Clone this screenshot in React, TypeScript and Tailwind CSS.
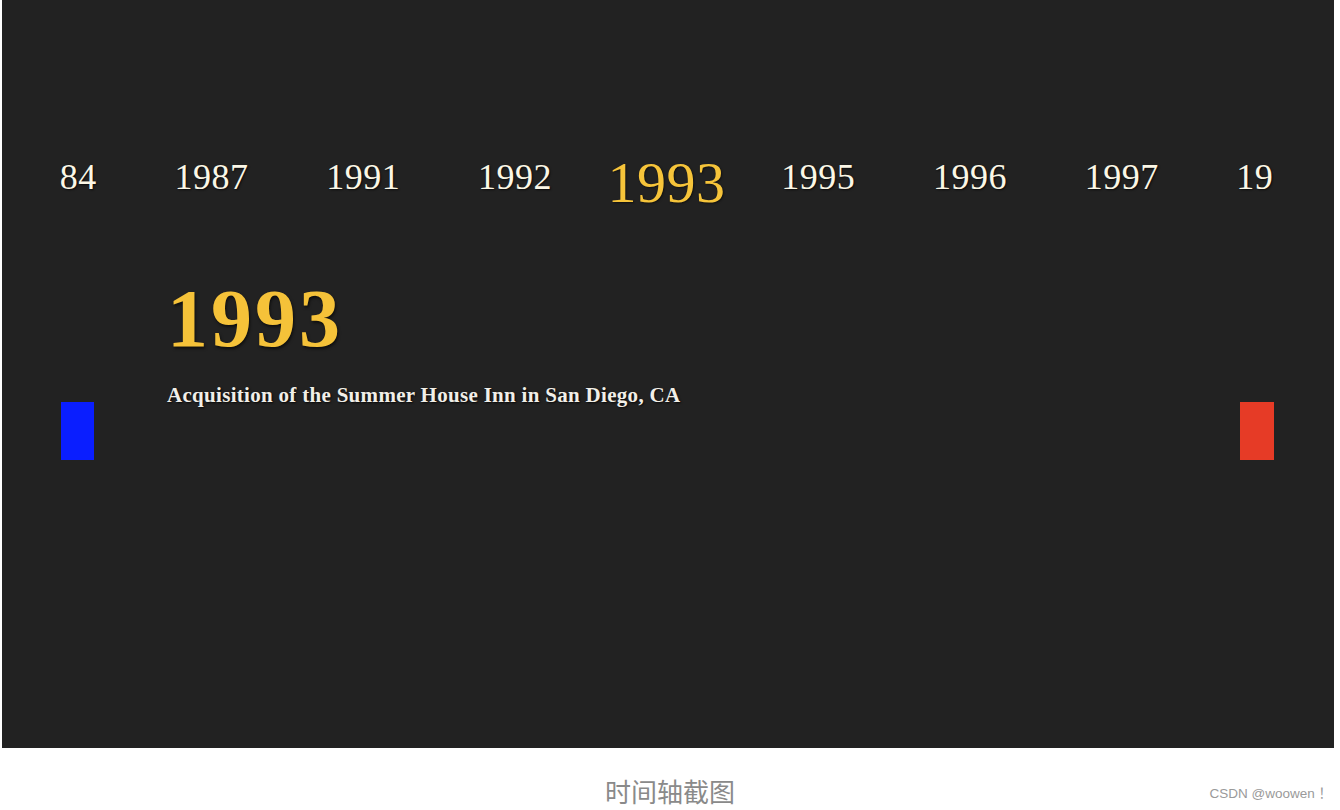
const YEARS = ['1984', '1987', '1991', '1992', '1993', '1995', '1996', '1997', '1998'];
const ACTIVE = '1993';

const EVENT = {
  year: '1993',
  text: 'Acquisition of the Summer House Inn in San Diego, CA',
};

const serif = "[font-family:Georgia,'Liberation_Serif','Times_New_Roman',serif]";

function YearStrip() {
  return (
    <div className="h-[80px] w-[1214px] overflow-hidden">
      {/* track is scrolled so the active year sits in the middle */}
      <div className="-ml-[76px] flex h-full items-center">
        {YEARS.map((y) =>
          y === ACTIVE ? (
            <div key={y} className="flex w-[151.7px] shrink-0 justify-center pt-[10px]">
              <span className={`${serif} text-[58px] leading-none tracking-[0.5px] text-[#f6c43a] [text-shadow:1px_1px_2px_rgba(0,0,0,0.5)]`}>{y}</span>
            </div>
          ) : (
            <div key={y} className="flex w-[151.7px] shrink-0 justify-center pb-[2px]">
              <span className={`${serif} text-[36px] leading-none tracking-[0.5px] text-[#fbf7e6] [text-shadow:1px_1px_2px_rgba(0,0,0,0.7)]`}>{y}</span>
            </div>
          ),
        )}
      </div>
    </div>
  );
}

export default function App() {
  return (
    <div className="h-[810px] w-[1340px] bg-white">
      <div className="ml-[2px] h-[748px] w-[1332px] bg-[#222222] pt-[138px]">
        <div className="pl-[58px]">
          <YearStrip />
        </div>

        <div className="mt-[60px] flex items-start pl-[59px] pr-[60px]">
          <button type="button" aria-label="prev" className="mt-[124px] h-[58px] w-[33px] shrink-0 bg-[#0a1eff]" />
          <div className="ml-[73px]">
            <h1 className={`${serif} text-[82px] font-bold leading-none tracking-[3px] text-[#f5c239] [text-shadow:1px_2px_3px_rgba(0,0,0,0.6)]`}>{EVENT.year}</h1>
            <p className={`${serif} mt-[25px] text-[21px] font-bold leading-none tracking-[0.3px] text-[#f1efe8] [text-shadow:1px_1px_2px_rgba(0,0,0,0.8)]`}>{EVENT.text}</p>
          </div>
          <button type="button" aria-label="next" className="ml-auto mt-[124px] h-[58px] w-[34px] shrink-0 bg-[#e63b26]" />
        </div>
      </div>

      <div className="relative h-[62px]">
        <p className="pt-[30px] text-center text-[26px] leading-[26px] text-[#8a8a8a] [font-family:'Noto_Sans_CJK_SC',sans-serif]">时间轴截图</p>
        <span className="absolute bottom-[6px] right-[8px] text-[13.5px] text-[#9a9a9a] [font-family:'Liberation_Sans','Noto_Sans_CJK_SC',sans-serif]">CSDN @woowen ！</span>
      </div>
    </div>
  );
}
